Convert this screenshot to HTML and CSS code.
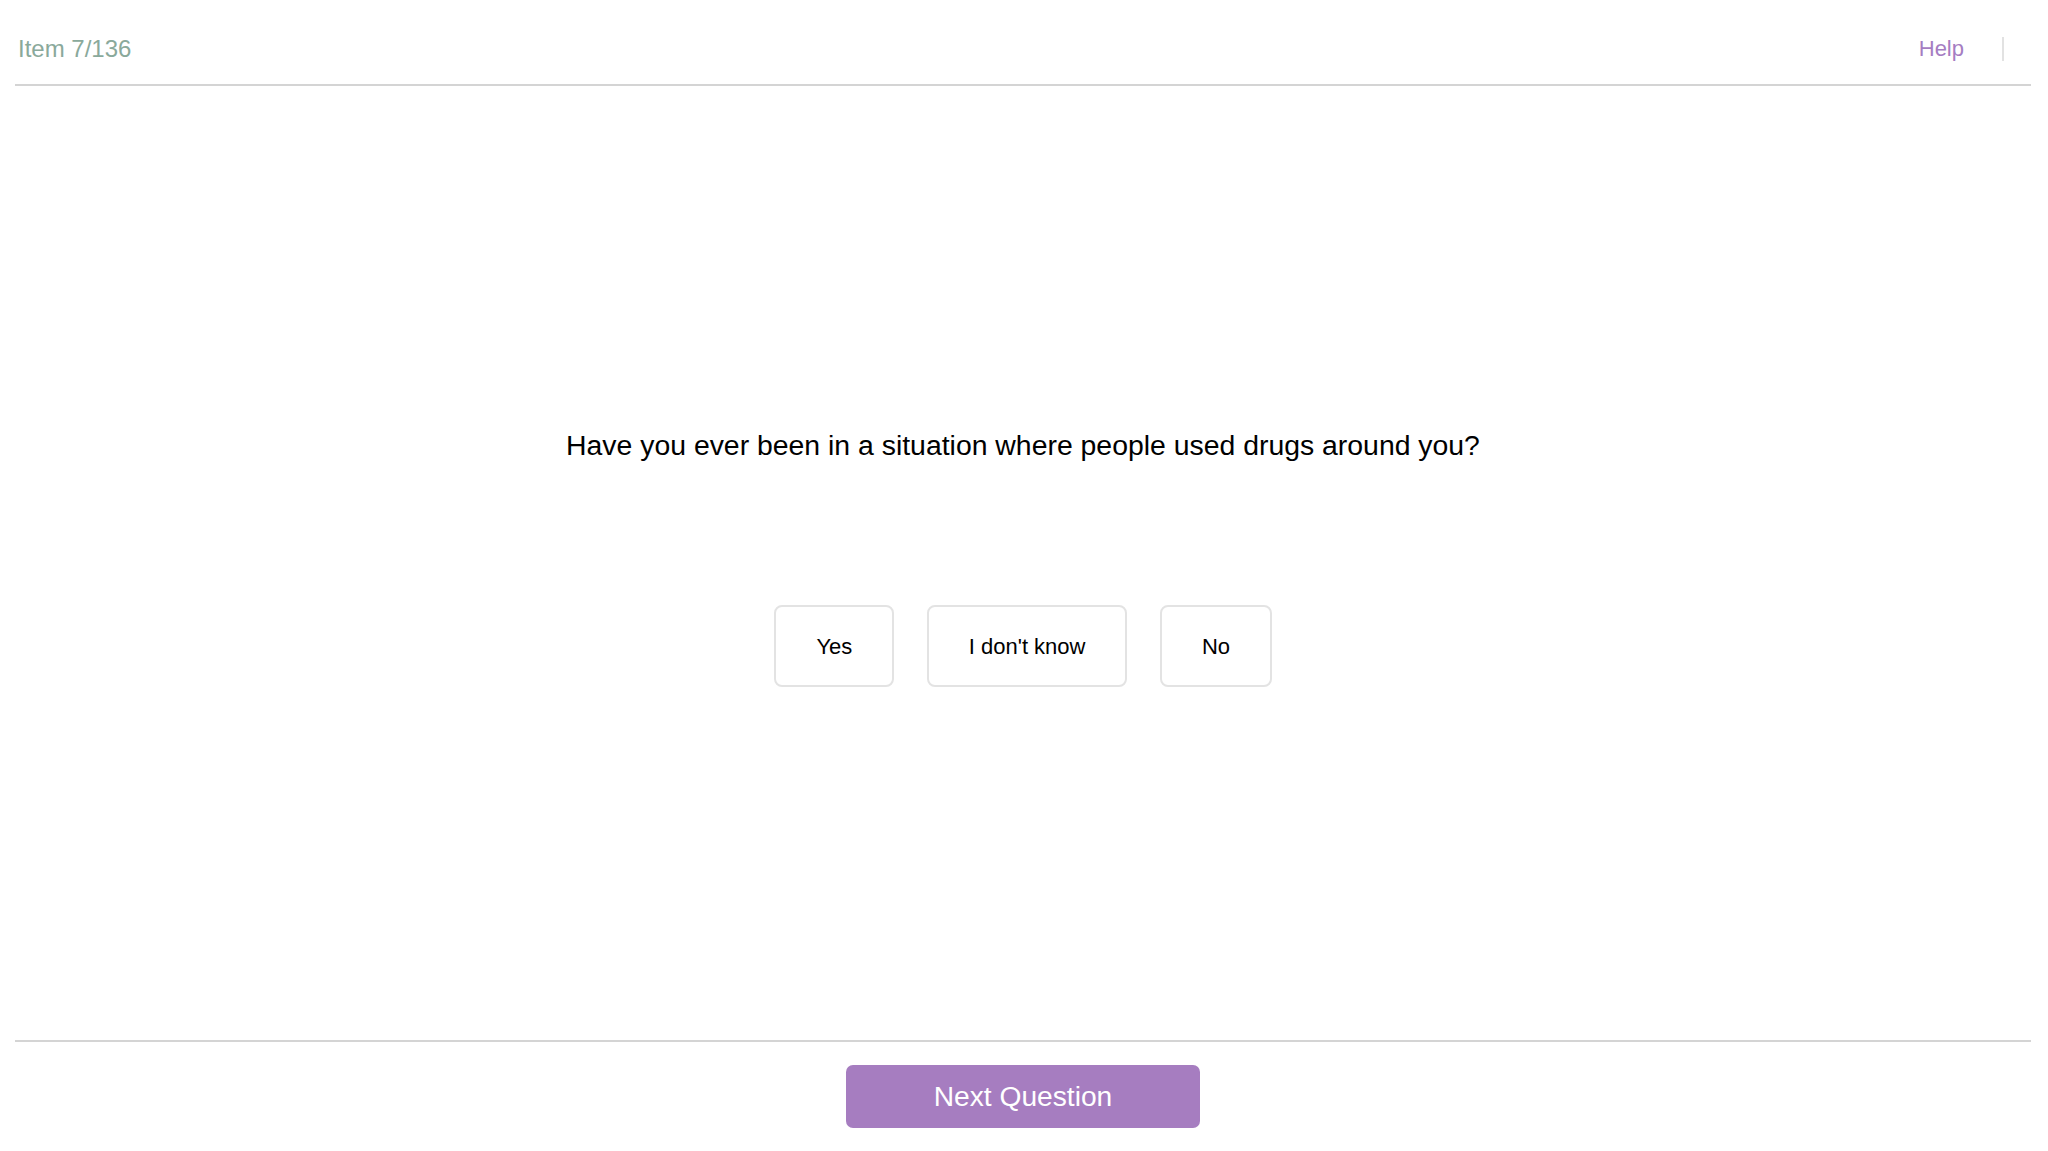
FILE: index.html
```html
<!DOCTYPE html>
<html lang="en">
<head>
<meta charset="utf-8">
<title>Item 7/136</title>
<link rel="stylesheet" href="styles.css">
</head>
<body>
<div class="page">
  <header class="topbar">
    <span class="counter">Item 7/136</span>
    <nav class="topnav">
      <a class="help" href="#">Help</a>
      <span class="divider"></span>
    </nav>
  </header>
  <main class="main">
    <h1 class="question">Have you ever been in a situation where people used drugs around you?</h1>
    <div class="options">
      <button class="opt">Yes</button>
      <button class="opt">I don't know</button>
      <button class="opt">No</button>
    </div>
  </main>
  <footer class="footer">
    <button class="next">Next Question</button>
  </footer>
</div>
</body>
</html>
```

FILE: styles.css
```css
* { box-sizing: border-box; }
html, body { margin: 0; padding: 0; background: #ffffff; }
body {
  font-family: "Liberation Sans", Arial, Helvetica, sans-serif;
  color: #000;
}
.page {
  margin: 0 17px 0 15px;
  height: 1151px;
  display: flex;
  flex-direction: column;
}
.topbar {
  height: 86px;
  border-bottom: 2px solid #d4d4d4;
  display: flex;
  align-items: flex-start;
  justify-content: space-between;
  padding: 35px 0 0 3px;
}
.counter {
  font-size: 24px;
  line-height: 28px;
  color: #8aa99b;
}
.topnav {
  display: flex;
  align-items: center;
  height: 28px;
}
.help {
  font-size: 22px;
  line-height: 28px;
  color: #a57dc2;
  text-decoration: none;
}
.divider {
  width: 2px;
  height: 24px;
  background: #e2e2e2;
  margin: 0 27px 0 38px;
}
.main {
  flex: 1;
  display: flex;
  flex-direction: column;
  align-items: center;
  padding-top: 343px;
}
.question {
  margin: 0;
  font-size: 28.4px;
  line-height: 32px;
  font-weight: normal;
  text-align: center;
}
.options {
  display: flex;
  justify-content: center;
  gap: 33px;
  margin-top: 144px;
}
.opt {
  font-family: inherit;
  font-size: 22px;
  line-height: 24px;
  color: #000;
  background: #fff;
  border: 2px solid #e3e3e3;
  border-radius: 8px;
  padding: 28px 39.5px 26px 40px;
  height: 82px;
}
.footer {
  border-top: 2px solid #d4d4d4;
  display: flex;
  justify-content: center;
  padding: 23px 0;
}
.next {
  width: 354px;
  height: 63px;
  background: #a67dc0;
  color: #fff;
  border: none;
  border-radius: 7px;
  font-family: inherit;
  font-size: 28.2px;
}
```
